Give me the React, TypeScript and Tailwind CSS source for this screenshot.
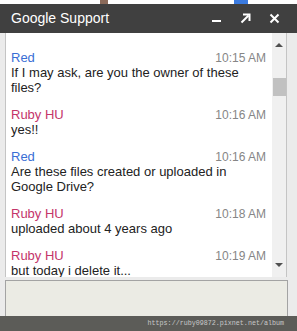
import { ReactNode } from 'react'

interface Message {
    from: 'red' | 'ruby'
    time: string
    text: string
}

const messages: Message[] = [
    { from: 'red', time: '10:15 AM', text: 'If I may ask, are you the owner of these files?' },
    { from: 'ruby', time: '10:16 AM', text: 'yes!!' },
    { from: 'red', time: '10:16 AM', text: 'Are these files created or uploaded in Google Drive?' },
    { from: 'ruby', time: '10:18 AM', text: 'uploaded about 4 years ago' },
    { from: 'ruby', time: '10:19 AM', text: 'but today i delete it...' },
]

function HeaderButton(props: { children: ReactNode }) {
    return (
        <svg width="11" height="11" viewBox="0 0 11 11" className="text-white">
            {props.children}
        </svg>
    )
}

function ChatMessage(props: { message: Message }) {
    const { message } = props
    const isRed = message.from === 'red'
    return (
        <div className="mb-[12px]">
            <div className="flex items-center justify-between h-[15px]">
                <span className={`text-[13px] ${isRed ? 'text-[#3a6ed5]' : 'text-[#c4356a]'}`}>
                    {isRed ? 'Red' : 'Ruby HU'}
                </span>
                <span className="text-[12px] text-[#868686]">{message.time}</span>
            </div>
            <p className="text-[13px] leading-[15px] text-[#222] pr-[20px]">{message.text}</p>
        </div>
    )
}

export default function App() {
    return (
        <div
            className="relative w-[297px] h-[331px] flex flex-col overflow-hidden"
            style={{ fontFamily: '"Liberation Sans", Arial, sans-serif' }}
        >
            <div className="h-[4px] bg-white flex">
                <div className="ml-[100px] w-[8px] bg-[#8a6a5a]" />
                <div className="ml-[126px] w-[14px] bg-[#3b7be0]" />
            </div>
            <div className="h-[29px] bg-[#404040] flex items-center pl-[11px] pr-[17px]">
                <span className="text-white text-[14px] flex-1">Google Support</span>
                <div className="flex items-center gap-[18px]">
                    <HeaderButton>
                        <rect x="1" y="7" width="9" height="2" fill="currentColor" />
                    </HeaderButton>
                    <HeaderButton>
                        <path d="M1.5 9.5 L8.5 2.5" stroke="currentColor" strokeWidth="2" />
                        <path d="M3 1.5 H9.5 V8" fill="none" stroke="currentColor" strokeWidth="2" />
                    </HeaderButton>
                    <HeaderButton>
                        <path d="M1.5 1.5 L9.5 9.5 M9.5 1.5 L1.5 9.5" stroke="currentColor" strokeWidth="2" />
                    </HeaderButton>
                </div>
            </div>
            <div className="flex-1 flex flex-col bg-[#ebebeb] pl-[5px] pr-[10px]">
                <div className="h-[244px] flex border-l border-r border-[#c4c4c4]">
                    <div className="flex-1 bg-white overflow-hidden pl-[5px] pr-[6px] pt-[17px]">
                        {messages.map((m, i) => (
                            <ChatMessage key={i} message={m} />
                        ))}
                    </div>
                    <div className="w-[14px] bg-[#f0f0f0] flex flex-col items-center pt-[10px] pb-[10px]">
                        <div className="w-0 h-0 border-l-[4px] border-r-[4px] border-b-[4px] border-l-transparent border-r-transparent border-b-[#505050]" />
                        <div className="mt-[31px] w-[13px] h-[18px] bg-[#c1c1c1]" />
                        <div className="flex-1" />
                        <div className="w-0 h-0 border-l-[4px] border-r-[4px] border-t-[4px] border-l-transparent border-r-transparent border-t-[#505050]" />
                    </div>
                </div>
                <div className="h-[3px]" />
                <div className="flex-1 border border-[#a3a3a3] bg-[#ebebe4] mr-[-1px]" />
            </div>
            <div className="absolute left-0 right-0 bottom-0 h-[15px] bg-[#5c5c58] flex items-center justify-end pr-[13px]">
                <span className="text-[6.7px] text-[#c8c8c8]" style={{ fontFamily: '"Liberation Mono", monospace' }}>
                    https://ruby09872.pixnet.net/album
                </span>
            </div>
        </div>
    )
}
